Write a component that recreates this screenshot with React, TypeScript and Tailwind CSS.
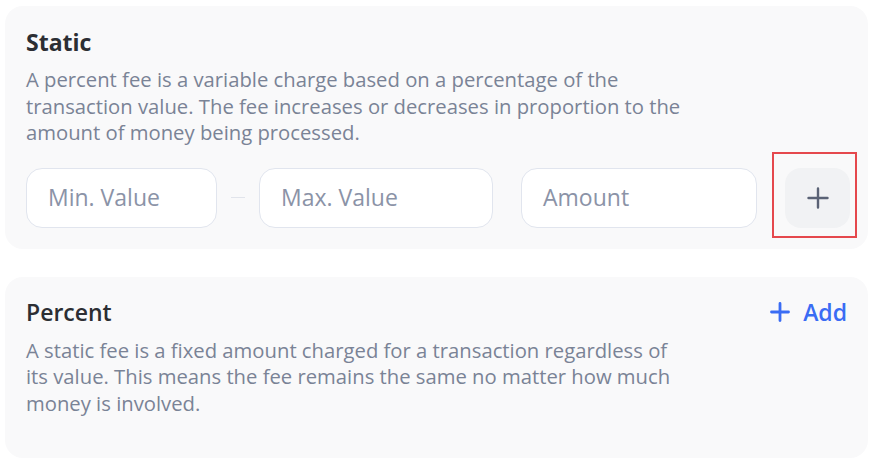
import React from "react";

function Input({ placeholder, w }: { placeholder: string; w: string }) {
  return (
    <div
      className={`${w} shrink-0 h-[60px] rounded-[16px] border border-[#e1e5ee] bg-white flex items-center px-[21px] text-[23px] text-[#8b93a7]`}
    >
      {placeholder}
    </div>
  );
}

export default function App() {
  return (
    <div
      className="w-[874px] h-[475px] bg-white pt-[6px] pl-[5px] pr-[6px]"
      style={{ fontFamily: '"Open Sans", sans-serif' }}
    >
      <div className="rounded-[18px] bg-[#f9f9fa] pl-[21px] pr-[18px] pt-[21px] pb-[21px]">
        <div className="text-[23px] leading-[30px] font-bold text-[#2c2e33]">Static</div>
        <p className="mt-[9px] max-w-[662px] text-[20.25px] leading-[26.5px] text-[#7a8396]">
          A percent fee is a variable charge based on a percentage of the transaction value. The fee
          increases or decreases in proportion to the amount of money being processed.
        </p>
        <div className="mt-[22px] flex items-center">
          <Input placeholder="Min. Value" w="w-[191px]" />
          <div className="mx-[14px] h-[1px] w-[14px] shrink-0 bg-[#e1e4eb]" />
          <Input placeholder="Max. Value" w="w-[234px]" />
          <div className="w-[28px] shrink-0" />
          <Input placeholder="Amount" w="w-[236px]" />
          <div className="relative ml-[28px] shrink-0">
            <button className="w-[65px] h-[60px] rounded-[16px] bg-[#f1f2f4] flex items-center justify-center text-[#5a6275]">
              <svg width="22" height="22" viewBox="0 0 22 22" fill="none" stroke="currentColor" strokeWidth="2.4" strokeLinecap="round">
                <path d="M11 1.5v19M1.5 11h19" />
              </svg>
            </button>
            <div className="pointer-events-none absolute -left-[13px] -right-[7px] -top-[16px] -bottom-[10px] border-2 border-[#e5484d]" />
          </div>
        </div>
      </div>

      <div className="mt-[28px] rounded-[18px] bg-[#f9f9fa] pl-[21px] pr-[21px] pt-[20px] pb-[42px] flex justify-between">
        <div>
          <div className="text-[23px] leading-[30px] font-semibold text-[#2c2e33]">Percent</div>
          <p className="mt-[10px] max-w-[662px] text-[20.25px] leading-[26.5px] text-[#7a8396]">
            A static fee is a fixed amount charged for a transaction regardless of its value. This
            means the fee remains the same no matter how much money is involved.
          </p>
        </div>
        <button className="self-start flex items-center gap-[13px] text-[#3a6cf4] text-[23px] leading-[30px] font-semibold">
          <svg width="20" height="20" viewBox="0 0 20 20" fill="none" stroke="currentColor" strokeWidth="2.8" strokeLinecap="round">
            <path d="M10 1.5v17M1.5 10h17" />
          </svg>
          Add
        </button>
      </div>
    </div>
  );
}
